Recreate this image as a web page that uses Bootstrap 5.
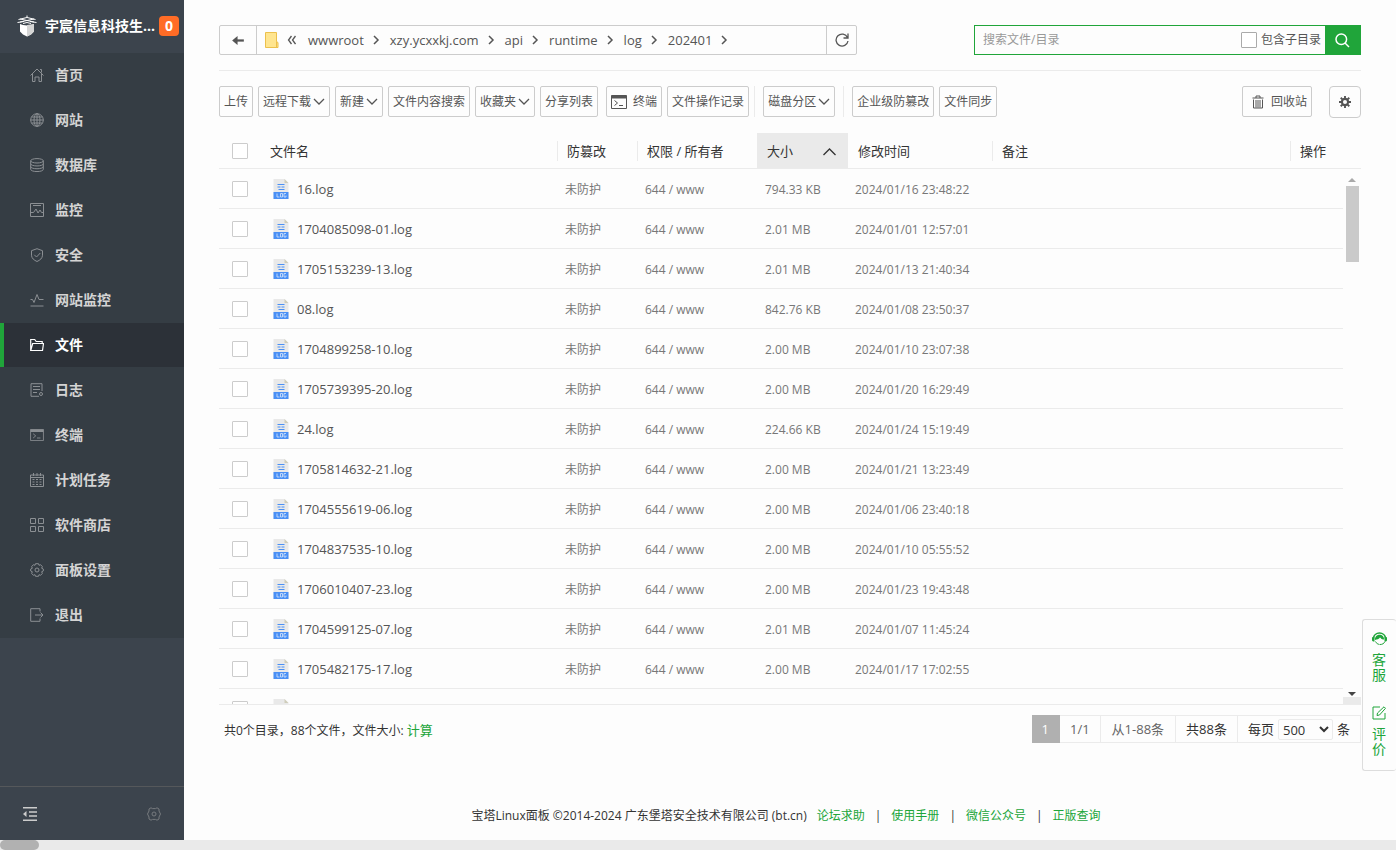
<!DOCTYPE html>
<html lang="zh-CN">
<head>
<meta charset="utf-8">
<meta name="viewport" content="width=device-width, initial-scale=1">
<title>文件 - 宝塔Linux面板</title>
<link rel="stylesheet" href="https://cdn.jsdelivr.net/npm/bootstrap@5.3.0/dist/css/bootstrap.min.css">
<style>
:root{--green:#20a53a;--line:#ebebeb;--edge:#ccc}
body{font-family:"Open Sans","Noto Sans CJK SC",sans-serif;font-size:12px;line-height:20px;color:#555;background:#fdfdfd;overflow:hidden}
a{color:var(--green);text-decoration:none}
svg{display:block;flex:none;fill:none;stroke:currentColor}
button{font-family:inherit}
.side{width:184px;flex:none;background:#3c444d}
.brand{height:53px;padding:0 0 2px 16px;font-size:14px;color:#fff;gap:7px}
.brand-tag{background:#ff6c26;border-radius:4px;width:20px;height:20px;line-height:20px;font-size:14px;margin-left:-3px}
.menu{background:#353d44}
.menu a{height:44px;margin-bottom:1px;padding-left:26px;border-left:4px solid transparent;color:#d4d4d4;font-size:14px;font-weight:700;gap:11px}
.menu a svg{color:#8b8f93}
.menu a.active{background:#2c3138;border-color:var(--green);color:#fff}
.menu a.active svg{color:#fff}
.side-foot{height:54px;border-top:1px solid #55585b;padding:0 22px;color:#ccc}
.side-foot button,.plain{background:none;border:0;padding:0;color:inherit}
.side-foot .dim{color:#777b7f}
.hbar{height:10px;background:#eaeaea}
.hbar div{width:39px;height:10px;border-radius:5px;background:#b1b1b1}
.page-main{padding:25px 35px 0;min-width:0}
.pathbar{width:638px;height:30px;border:1px solid var(--edge);border-radius:2px;font-size:13px}
.pathbar .back{width:37px;border-right:1px solid var(--edge)}
.pathbar .reload{width:30px;border-left:1px solid var(--edge)}
.pathbar a{color:#555}
.crumbs{gap:8px;padding-left:8px}
.crumbs .part{margin-left:2px}
.crumbs .part:first-of-type{margin-left:4px}
.search{width:387px;height:30px;border:1px solid var(--green)}
.search input[type=text]{border:0;outline:0;background:none;min-width:0;padding:0 8px;font-size:12px}
.search input::placeholder{color:#999}
.search button{width:35px;background:var(--green);border:0;color:#fff}
.tick{appearance:none;width:16px;height:16px;border:1px solid var(--edge);border-radius:1px;background:#fff;margin:0;display:block}
.tick:checked{background:var(--green)}
.search .tick{border-color:#aaa}
.rule{border-top:1px solid var(--line);margin-top:15px;padding-top:15px}
.tools{gap:5px}
.tool{height:31px;border:1px solid var(--edge);border-radius:2px;background:#fdfdfd;color:#555;padding:0 4px;font-size:12px;line-height:20px;display:flex;align-items:center;white-space:nowrap;gap:2px}
.tool.gap{gap:6px}
.tool.push{margin-left:3px}
.tool-cog{width:32px;height:32px}
.tool-sep{width:1px;height:31px;background:var(--line);margin-right:3px}
.tool-sep.push{margin-left:3px}
.files{table-layout:fixed;width:100%;border-collapse:separate;border-spacing:0}
.files.head{margin-top:15px}
.files th{height:36px;border-bottom:1px solid var(--line);font-size:13px;font-weight:400;color:#333;padding:0 0 0 10px}
.files th:not(.bare){background:linear-gradient(var(--line),var(--line)) 0 8px/1px 20px no-repeat}
.files th.sorted{background:#eaeaea}
.files td{height:40px;border-bottom:1px solid var(--line);color:#777;padding:2px 0 0 8px;white-space:nowrap}
.files td.fname{font-size:13px;color:#555;padding:0 0 0 13px}
.files th:first-child,.files td:first-child{padding:0 0 0 13px}
.list{height:calc(100vh - 314px);border-bottom:1px solid var(--line)}
.vbar{width:18px;flex:none;padding-top:8px}
.vbar .thumb{width:13px;height:76px;background:#cacaca}
.vbar .corner{height:7px;width:100%;background:#eaeaea}
.foot{margin-top:10px}
.summary{padding:2px 0 0 5px;color:#333}
.pager>*{height:28px;line-height:26px;border:1px solid var(--line);border-left:0;padding:0 10px;font-size:13px;color:#666;white-space:nowrap}
.pager .cur{background:#b0b0b0;border-color:#b0b0b0;color:#fff}
.pager .range{padding:0 11px}
.pager .dark{color:#333}
.pager select{height:21px;border:1px solid var(--line);border-radius:2px;background:#fdfdfd;font-size:13px;color:#333;width:55px;line-height:18px;padding:0}
.copy{padding-top:63px;color:#333;white-space:nowrap;gap:10px}
.helpdock{right:0;top:619px;width:34px;height:152px;background:#fdfdfd;border:1px solid #ddd;border-right:0;border-radius:3px;padding-top:12px;font-size:14px;line-height:15px}
.helpdock a{width:15px}
.helpdock svg{margin-bottom:6px}
</style>
</head>
<body>
<svg width="0" height="0" class="position-absolute">
<symbol id="down" viewBox="0 0 12 12"><path d="M1 3l5 5 5-5" stroke-width="1.300"/></symbol>
<symbol id="next" viewBox="0 0 8 10"><path d="M2 1l4 4-4 4" stroke-width="1.500"/></symbol>
<symbol id="term" viewBox="0 0 16 14"><path d="M.5.5h15v13H.5z"/><path d="M.5 2h15" stroke-width="3"/><path d="M3.500 5.500l3 2.500-3 2.500M8 10.500h4"/></symbol>
<symbol id="log" viewBox="0 0 15 20"><path d="M0 0h11l4 4v16H0z" fill="#e9e9e9" stroke="none"/><path d="M11 0l4 4h-4z" fill="#cfcdbb" stroke="none"/><path d="M4 5.500h7M4 8h3M8 8h3M5 10.500h6" stroke="#4a90f5"/><path d="M0 13h15v7H0z" fill="#4a90f5" stroke="none"/><path d="M3.500 14.500v3.500H6M7 14.500h2V18H7zM12.500 14.500h-2V18h2v-1.500" stroke="#c8defc" stroke-width=".9"/></symbol>
</svg>
<div class="d-flex flex-column vh-100">
<div class="d-flex flex-grow-1">
<aside class="side d-flex flex-column">
  <div class="brand d-flex align-items-center fw-bold text-nowrap">
    <svg width="22" height="22" viewBox="0 0 22 22"><path d="M4 9l3 1 4 .5 4-.5 3-1v7.500l-3 3-4 2-4-2-3-3z" fill="#fff" stroke="none"/><path d="M11 10v11.500l4-2 3-3V9z" fill="#d5d5d5" stroke="none"/><path d="M2.500 4.500L11 2.500l8.500 2M4 7l14-3M18 7L4 4M1.500 7.500L8 6.500M20.500 7.500L14 6.500M7 8.500l4-1 4 1M11 .5v2"/></svg>
    <span>宇宸信息科技生...</span><span class="brand-tag text-center">0</span>
  </div>
  <nav class="menu">
    <a href="#" class="d-flex align-items-center"><svg width="14" height="14" viewBox="0 0 14 14"><path d="M.5 7.500L7 1l6.500 6.500M2.500 6v7.500H5V9h4v4.500h2.500V6M10 1.500h1.500v3"/></svg>首页</a>
    <a href="#" class="d-flex align-items-center"><svg width="14" height="14" viewBox="0 0 14 14"><circle cx="7" cy="7" r="6.300"/><ellipse cx="7" cy="7" rx="3" ry="6.300"/><path d="M7 .5v13M.5 7h13M1.500 4h11M1.500 10h11"/></svg>网站</a>
    <a href="#" class="d-flex align-items-center"><svg width="14" height="14" viewBox="0 0 14 14"><ellipse cx="7" cy="2.800" rx="6.300" ry="2.200"/><path d="M.7 2.800v8.500c0 3 12.600 3 12.600 0V2.800M.7 5.700c0 3 12.600 3 12.600 0M.7 8.500c0 3 12.600 3 12.600 0"/></svg>数据库</a>
    <a href="#" class="d-flex align-items-center"><svg width="14" height="14" viewBox="0 0 14 14"><path d="M.5.5h13v13H.5zM3 2.500h8M1 9.500h2.500L6 6l2 4 2-3 1.500 2.500H13"/></svg>监控</a>
    <a href="#" class="d-flex align-items-center"><svg width="14" height="14" viewBox="0 0 14 14"><path d="M7 .7l5.500 2v4.500c0 3-2.500 5-5.500 6.300-3-1.300-5.500-3.300-5.500-6.300V2.700zM4.300 6.800l2.200 2.200 3.800-4"/></svg>安全</a>
    <a href="#" class="d-flex align-items-center"><svg width="14" height="14" viewBox="0 0 14 14"><path d="M.5 6.500h2l1.500 3L7 1.500l2 5h4.500M.5 13h13"/></svg>网站监控</a>
    <a href="#" class="d-flex align-items-center active"><svg width="14" height="14" viewBox="0 0 14 14"><path d="M.7 12.500V1.500h4l1.500 2h6v2M.7 12.500l2-7h10.800l-1 7z" stroke-width="1.200"/></svg>文件</a>
    <a href="#" class="d-flex align-items-center"><svg width="14" height="14" viewBox="0 0 14 14"><path d="M12 8V.7H1v12.600h8M3 3.500h7M3 6.500h7M3 9.500h4"/><circle cx="11" cy="11" r="1.500"/></svg>日志</a>
    <a href="#" class="d-flex align-items-center"><svg width="14" height="12"><use href="#term"/></svg>终端</a>
    <a href="#" class="d-flex align-items-center"><svg width="14" height="14" viewBox="0 0 14 14"><path d="M.5 2h13v11.500H.5zM.5 4.500h13M3.500 0v3M7 0v3M10.500 0v3"/><path d="M2.500 6.500h9M2.500 9h9M2.500 11.500h9" stroke-dasharray="2 1.500"/></svg>计划任务</a>
    <a href="#" class="d-flex align-items-center"><svg width="14" height="14" viewBox="0 0 14 14"><path d="M.5.5h5v5h-5zM8.500.5h5v5h-5zM.5 8.500h5v5h-5zM8.500 8.500h5v5h-5z"/></svg>软件商店</a>
    <a href="#" class="d-flex align-items-center"><svg width="14" height="14" viewBox="0 0 14 14"><path d="M5.500.7h3l.5 1.600 1.600-.6 1.800 2-.8 1.500 1.700.8v2l-1.700.8.8 1.500-1.800 2-1.600-.6-.5 1.600h-3L5 11.700l-1.600.6-1.800-2 .8-1.500L.7 8V6l1.700-.8-.8-1.500 1.800-2 1.600.6z"/><circle cx="7" cy="7" r="2"/></svg>面板设置</a>
    <a href="#" class="d-flex align-items-center"><svg width="14" height="14" viewBox="0 0 14 14"><path d="M10 3.500V.7H.7v12.600H10v-2.800M5 7h8M10.500 4.500L13 7l-2.500 2.500"/></svg>退出</a>
  </nav>
  <div class="side-foot d-flex align-items-center justify-content-between mt-auto">
    <button aria-label="收起菜单"><svg width="16" height="14" viewBox="0 0 16 14"><path d="M1 .7h14M7 5h8M7 9h8M1 13.300h14" stroke-width="1.500"/><path d="M4.500 4v6L1 7z" fill="currentColor" stroke="none"/></svg></button>
    <button class="dim" aria-label="设置"><svg width="16" height="14" viewBox="-1 0 16 14"><path d="M4 .8l1.500.8h3L10 .8l2 1.200v2L13.500 7 12 10v2l-2 1.200-1.500-.8h-3l-1.500.8L2 12v-2L.5 7 2 4V2z"/><circle cx="7" cy="7" r="2"/></svg></button>
  </div>
</aside>
<main class="page-main flex-grow-1">
  <div class="d-flex justify-content-between">
    <div class="pathbar d-flex align-items-stretch">
      <button class="plain back d-flex align-items-center justify-content-center" aria-label="返回"><svg width="12" height="9" viewBox="0 0 13 10"><path d="M3 5h10" stroke-width="2.500"/><path d="M0 5l6-5v10z" fill="currentColor" stroke="none"/></svg></button>
      <div class="crumbs d-flex align-items-center flex-grow-1">
        <svg width="14" height="16" viewBox="0 0 14 16"><path d="M.5.5h11v9l1.500 1v5H.5z" fill="#ffe58f" stroke="#ecc04c"/><path d="M11.500 9.500v6" stroke="#ecc04c"/></svg>
        <svg width="9" height="10" viewBox="0 0 9 10"><path d="M4.500 1l-3 4 3 4M8.500 1l-3 4 3 4" stroke-width="1.300"/></svg>
        <a class="part" href="#">wwwroot</a><svg width="8" height="10"><use href="#next"/></svg>
        <a class="part" href="#">xzy.ycxxkj.com</a><svg width="8" height="10"><use href="#next"/></svg>
        <a class="part" href="#">api</a><svg width="8" height="10"><use href="#next"/></svg>
        <a class="part" href="#">runtime</a><svg width="8" height="10"><use href="#next"/></svg>
        <a class="part" href="#">log</a><svg width="8" height="10"><use href="#next"/></svg>
        <a class="part" href="#">202401</a><svg width="8" height="10"><use href="#next"/></svg>
      </div>
      <button class="plain reload d-flex align-items-center justify-content-center" aria-label="刷新"><svg width="14" height="14" viewBox="0 0 14 14"><path d="M12.500 4.500A6 6 0 1 0 13 8M13 .5v4.500H8.500" stroke-width="1.300"/></svg></button>
    </div>
    <form class="search d-flex align-items-stretch">
      <input type="text" class="flex-grow-1" placeholder="搜索文件/目录" aria-label="搜索文件/目录">
      <label class="d-flex align-items-center gap-1 pe-1 text-nowrap"><input class="tick" type="checkbox">包含子目录</label>
      <button type="button" class="d-flex align-items-center justify-content-center" aria-label="搜索"><svg width="15" height="15" viewBox="0 0 15 15" stroke-width="1.500"><circle cx="6.300" cy="6.300" r="5.300"/><path d="M10 10l4 4"/></svg></button>
    </form>
  </div>
  <div class="rule tools d-flex">
    <button class="tool">上传</button>
    <button class="tool">远程下载<svg width="12" height="12"><use href="#down"/></svg></button>
    <button class="tool">新建<svg width="12" height="12"><use href="#down"/></svg></button>
    <button class="tool">文件内容搜索</button>
    <button class="tool">收藏夹<svg width="12" height="12"><use href="#down"/></svg></button>
    <button class="tool">分享列表</button>
    <button class="tool gap push"><svg width="16" height="14"><use href="#term"/></svg>终端</button>
    <button class="tool">文件操作记录</button>
    <span class="tool-sep"></span>
    <button class="tool">磁盘分区<svg width="12" height="12"><use href="#down"/></svg></button>
    <span class="tool-sep push"></span>
    <button class="tool">企业级防篡改</button>
    <button class="tool">文件同步</button>
    <button class="tool ms-auto ps-2 me-2"><svg class="me-1" width="14" height="14" viewBox="0 0 14 14"><path d="M1.500 3h11M5 3V1h4v2M2.500 4.500v8.500h9V4.500M5 5v7.500M7 5v7.500M9 5v7.500"/></svg>回收站</button>
    <button class="tool tool-cog justify-content-center rounded-1 ms-1" aria-label="文件设置"><svg width="12" height="12" viewBox="0 0 14 14"><circle cx="7" cy="7" r="3.600" stroke-width="2.500"/><path d="M7 0v3M7 11v3M0 7h3M11 7h3M2 2l2 2M10 10l2 2M12 2l-2 2M4 10l-2 2" stroke-width="2.200"/></svg></button>
  </div>
  <table class="files head">
    <colgroup><col style="width:41px"><col><col style="width:80px"><col style="width:120px"><col style="width:91px"><col style="width:144px"><col style="width:298px"><col style="width:71px"></colgroup>
    <thead><tr><th class="bare"><input class="tick" type="checkbox" aria-label="全选"></th><th class="bare">文件名</th><th>防篡改</th><th>权限 / 所有者</th><th class="sorted"><span class="d-flex align-items-center justify-content-between pe-2">大小<svg class="me-1" width="13" height="10" viewBox="0 0 13 10"><path d="M.5 9l6-6 6 6" stroke-width="1.300"/></svg></span></th><th class="bare">修改时间</th><th>备注</th><th>操作</th></tr></thead>
  </table>
  <div class="list d-flex overflow-hidden">
    <div class="flex-grow-1">
      <table class="files">
        <colgroup><col style="width:41px"><col><col style="width:80px"><col style="width:120px"><col style="width:90px"><col style="width:144px"><col style="width:298px"><col style="width:54px"></colgroup>
        <tbody id="rows"></tbody>
      </table>
    </div>
    <div class="vbar d-flex flex-column align-items-center"><svg width="8" height="5" viewBox="0 0 8 5"><path d="M0 5l4-4 4 4z" fill="#aaa" stroke="none"/></svg><div class="thumb mt-1"></div><svg class="mt-auto" width="8" height="5" viewBox="0 0 8 5"><path d="M0 0l4 4 4-4z" fill="#444" stroke="none"/></svg><span class="corner"></span></div>
  </div>
  <div class="foot d-flex justify-content-between align-items-center">
    <div class="summary text-nowrap">共0个目录，88个文件，文件大小: <a href="#" style="font-size:13px">计算</a></div>
    <div class="pager d-flex">
      <span class="cur">1</span><span>1/1</span><span class="range">从1-88条</span><span class="dark">共88条</span>
      <label class="dark d-flex align-items-center gap-1">每页<select><option>500</option><option>1000</option></select>条</label>
    </div>
  </div>
  <footer class="copy d-flex justify-content-center pe-2"><span>宝塔Linux面板 ©2014-2024 广东堡塔安全技术有限公司 (bt.cn)</span><a href="#">论坛求助</a>|<a href="#">使用手册</a>|<a href="#">微信公众号</a>|<a href="#">正版查询</a></footer>
</main>
</div>
<div class="hbar"><div></div></div>
</div>
<div class="helpdock position-fixed d-flex flex-column align-items-center">
  <a href="#"><svg width="15" height="14" viewBox="0 0 15 14"><path d="M1.500 7V6a6 5 0 0 1 12 0v1" stroke-width="1.300"/><path d="M0 5.500L2.500 4v5.500H1L0 8.500zM15 5.500L12.500 4v5.500H14l1-1zM3 8c-.5-7 9.500-7 9-.5C9.500 8 9 6 8 5.500 7 7.500 5 7 3 8z" fill="currentColor" stroke="none"/><path d="M3.500 9.500c1 2 2 2.500 4 3M13 9.500c-1 2-2.500 3-5 3"/></svg>客服</a>
  <a href="#" class="mt-4"><svg width="14" height="14" viewBox="0 0 14 14"><path d="M8 1H1v12h12V7M5 9.500l.5-2.500L12 .8 13.500 2.300 7.500 9z"/></svg>评价</a>
</div>
<script>
const files = [
  ['16.log','794.33 KB','2024/01/16 23:48:22'],
  ['1704085098-01.log','2.01 MB','2024/01/01 12:57:01'],
  ['1705153239-13.log','2.01 MB','2024/01/13 21:40:34'],
  ['08.log','842.76 KB','2024/01/08 23:50:37'],
  ['1704899258-10.log','2.00 MB','2024/01/10 23:07:38'],
  ['1705739395-20.log','2.00 MB','2024/01/20 16:29:49'],
  ['24.log','224.66 KB','2024/01/24 15:19:49'],
  ['1705814632-21.log','2.00 MB','2024/01/21 13:23:49'],
  ['1704555619-06.log','2.00 MB','2024/01/06 23:40:18'],
  ['1704837535-10.log','2.00 MB','2024/01/10 05:55:52'],
  ['1706010407-23.log','2.00 MB','2024/01/23 19:43:48'],
  ['1704599125-07.log','2.01 MB','2024/01/07 11:45:24'],
  ['1705482175-17.log','2.00 MB','2024/01/17 17:02:55'],
  ['','','']
];
document.getElementById('rows').innerHTML = files.map(([name, size, time]) => `<tr>
  <td><input class="tick" type="checkbox" aria-label="选择 ${name}"></td>
  <td class="fname"><span class="d-flex align-items-center gap-2"><svg width="16" height="20"><use href="#log"/></svg><span>${name}</span></span></td>
  <td>${name && '未防护'}</td><td>${name && '644 / www'}</td><td>${size}</td><td>${time}</td><td></td><td></td></tr>`).join('');
</script>
<script src="https://cdn.jsdelivr.net/npm/bootstrap@5.3.0/dist/js/bootstrap.bundle.min.js"></script>
</body>
</html>
